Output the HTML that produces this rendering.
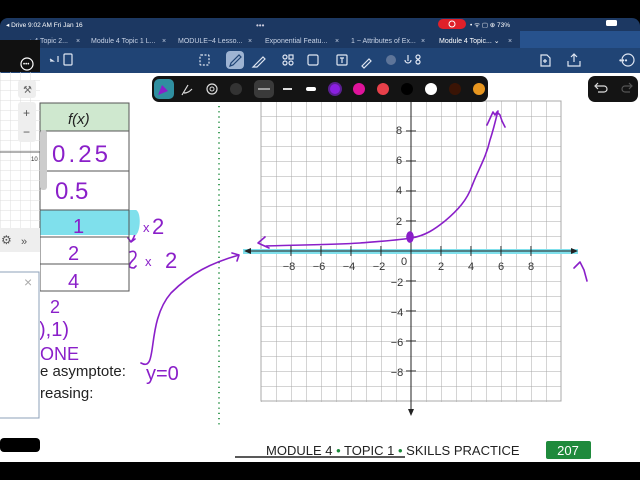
<!DOCTYPE html>
<html><head><meta charset="utf-8"><style>
html,body{margin:0;padding:0;background:#000;width:640px;height:480px;overflow:hidden}
svg{display:block}
text{font-family:"Liberation Sans",sans-serif}
</style></head><body>
<svg width="640" height="480" viewBox="0 0 640 480" xmlns="http://www.w3.org/2000/svg">
<defs>
<pattern id="g" x="261" y="101" width="15" height="15" patternUnits="userSpaceOnUse">
<path d="M0 0H15M0 0V15" stroke="#a8a8a8" stroke-width="1" fill="none"/>
</pattern>
<pattern id="g2" x="0" y="0" width="10" height="10" patternUnits="userSpaceOnUse">
<path d="M0 0H10M0 0V10" stroke="#dcdcdc" stroke-width="1" fill="none"/>
</pattern>
</defs>
<rect width="640" height="480" fill="#000"/>
<rect x="0" y="18" width="640" height="55" fill="#1c3862" rx="8"/>
<rect x="0" y="48" width="640" height="25" fill="#204475"/>
<text x="6" y="27" font-size="6.5" fill="#fff">◂ Drive  9:02 AM  Fri Jan 16</text>
<text x="256" y="28" font-size="8" fill="#ccd">•••</text>
<rect x="438" y="19" width="28" height="10" rx="5" fill="#e0202a"/>
<circle cx="452" cy="24" r="3" fill="none" stroke="#fff" stroke-width="1"/>
<text x="470" y="27" font-size="6.5" fill="#fff">• ᯤ ▢ ⊕ 73%</text>
<rect x="606" y="20" width="11" height="6" rx="1.5" fill="#fff"/>
<rect x="520" y="31" width="120" height="17" fill="#27528d"/>
<g font-size="7" fill="#c8d3e6">
<text x="30" y="43">› 4 Topic 2...</text><text x="76" y="43">×</text>
<text x="91" y="43">Module 4 Topic 1 L...</text><text x="162" y="43">×</text>
<text x="178" y="43">MODULE~4 Lesso...</text><text x="248" y="43">×</text>
<text x="265" y="43">Exponential Featu...</text><text x="335" y="43">×</text>
<text x="351" y="43">1 ~ Attributes of Ex...</text><text x="421" y="43">×</text>
<text x="439" y="43" fill="#fff">Module 4 Topic... ⌄</text><text x="508" y="43">×</text>
</g>
<g fill="none" stroke="#dfe6f2" stroke-width="1.2">
<rect x="200" y="55" width="9" height="10" rx="1" stroke-dasharray="2 1.5"/>
<rect x="226" y="51" width="18" height="18" rx="4" fill="#9eb4d3" stroke="none"/>
<path d="M230 66l3-1 8-8-2-2-8 8z" stroke="#204475"/>
<path d="M255 65l8-8 2 2-8 8h-4z"/>
<circle cx="285" cy="57" r="2"/><rect x="289" y="55" width="4" height="4"/><circle cx="285" cy="63" r="2"/><circle cx="291" cy="63" r="2"/>
<rect x="308" y="55" width="10" height="10" rx="1.5"/>
<rect x="337" y="55" width="10" height="10" rx="1"/><path d="M340 58h4M342 58v5"/>
<path d="M362 66l7-7 2 2-7 7z"/>
<circle cx="391" cy="60" r="5" fill="#5e7599" stroke="none"/>
<path d="M408 55v6M405 60a3 3 0 006 0"/><circle cx="418" cy="57" r="2"/><circle cx="418" cy="62" r="2"/>
<path d="M541 55h6l3 3v8h-9z"/><path d="M545 59v4M543 61h4"/>
<path d="M571 57l3-3 3 3M574 54v8M568 61v5h12v-5"/>
<circle cx="628" cy="60" r="6"/>
<path d="M50 59l3 2-3 0M58 56v6"/>
<rect x="64" y="54" width="8" height="11" rx="1"/>
</g>
<text x="619" y="63" font-size="8" fill="#dfe6f2">•••</text>
<rect x="0" y="73" width="640" height="389" fill="#fff"/>
<line x1="219" y1="80" x2="219" y2="425" stroke="#1a8a3a" stroke-width="1.6" stroke-dasharray="1.2 4"/>
<rect x="261" y="101" width="300" height="301" fill="url(#g)"/>
<rect x="261" y="101" width="300" height="300" fill="none" stroke="#a8a8a8"/>
<line x1="243" y1="251.5" x2="578" y2="251.5" stroke="#7fe0ec" stroke-width="5"/>
<line x1="248" y1="251" x2="574" y2="251" stroke="#222" stroke-width="1"/>
<path d="M244 251l7-3v6zM578 251l-7-3v6z" fill="#222"/>
<line x1="411" y1="95" x2="411" y2="410" stroke="#222" stroke-width="1"/>
<path d="M411 416l-3-7h6z" fill="#222"/>
<g font-size="11" fill="#333" text-anchor="middle" font-family="DejaVu Sans">
<text x="289" y="270">−8</text><text x="319" y="270">−6</text><text x="349" y="270">−4</text><text x="379" y="270">−2</text>
<text x="404" y="265">0</text><text x="441" y="270">2</text><text x="471" y="270">4</text><text x="501" y="270">6</text><text x="531" y="270">8</text>
<text x="399" y="134">8</text><text x="399" y="164">6</text><text x="399" y="194">4</text><text x="399" y="225">2</text>
<text x="397" y="286">−2</text><text x="397" y="316">−4</text><text x="397" y="346">−6</text><text x="397" y="376">−8</text>
</g>
<g stroke="#222"><path d="M406 131h10M406 161h10M406 191h10M406 221h10M406 281h10M406 311h10M406 341h10M406 371h10M291 246v10M321 246v10M351 246v10M381 246v10M441 246v10M471 246v10M501 246v10M531 246v10"/></g>
<g fill="none" stroke="#8a1fc9" stroke-width="1.6" stroke-linecap="round" stroke-linejoin="round">
<path d="M266 246 C290 245 330 245 360 243 C385 241 400 240 411 238 C425 236 435 229 445 221 C458 210 467 200 472 186 C478 170 486 158 490 140 C494 128 496 118 498 111"/>
<path d="M487 125l6-13 2 3 2-3 3 3 2 6 3 6"/>
<path d="M265 237l-7 6 11 5"/>
<path d="M574 268l6-6 4 8 3 11"/>
<ellipse cx="410" cy="237" rx="3" ry="5" fill="#8a1fc9"/>
<path d="M129 226c8-2 8 8 2 16l-3-4M131 242l4-3"/>
<path d="M130 252c6-3 8 4 3 8c-4 4-6 8 1 8l2-2"/>
<path d="M141 363c18 10 4-40 30-70c20-20 40-30 68-38l-7-2M239 255l-2 6"/>
</g>
<g fill="#8a1fc9" font-size="13"><text x="143" y="232">x</text><text x="145" y="266">x</text></g>
<g fill="#8a1fc9" font-size="22"><text x="152" y="234">2</text><text x="165" y="268">2</text></g>
<text x="146" y="380" font-size="20" fill="#8a1fc9">y=0</text>
<rect x="40" y="103" width="89" height="28" fill="#cfe8cf"/>
<path d="M40 210h96c5 2 5 20 0 25H40z" fill="#7fe0ec"/>
<g fill="none" stroke="#555" stroke-width="1">
<rect x="40" y="103" width="89" height="188"/>
<path d="M40 131h89M40 171h89M40 210h89M40 237h89M40 264h89"/>
</g>
<text x="68" y="124" font-size="15" font-style="italic" fill="#222">f(x)</text>
<g fill="#8a1fc9" font-size="24">
<text x="52" y="162" textLength="56">0.25</text><text x="55" y="199">0.5</text>
<text x="73" y="233" font-size="20">1</text><text x="68" y="260" font-size="20">2</text><text x="68" y="288" font-size="20">4</text>
<text x="50" y="313" font-size="18">2</text><text x="39" y="336" font-size="20">),1)</text><text x="40" y="360" font-size="18">ONE</text>
</g>
<text x="40" y="376" font-size="15" fill="#222">e asymptote:</text>
<text x="40" y="398" font-size="15" fill="#222">reasing:</text>
<line x1="235" y1="457" x2="405" y2="457" stroke="#222" stroke-width="1.5"/>
<text x="266" y="455" font-size="13" fill="#222">MODULE 4  <tspan fill="#1a8a3a">•</tspan>  TOPIC 1  <tspan fill="#1a8a3a">•</tspan>  SKILLS PRACTICE</text>
<rect x="546" y="441" width="45" height="18" rx="2" fill="#1f8a3c"/>
<text x="568" y="455" font-size="13" fill="#fff" text-anchor="middle">207</text>
<rect x="0" y="40" width="40" height="32" fill="#111"/>
<circle cx="27" cy="64" r="6" fill="none" stroke="#fff" stroke-width="1.2"/>
<text x="23" y="66" font-size="6" fill="#fff">•••</text>
<rect x="0" y="72" width="40" height="156" fill="url(#g2)"/>
<line x1="0" y1="152" x2="40" y2="152" stroke="#666"/>
<text x="31" y="161" font-size="6" fill="#333">10</text>
<rect x="18" y="80" width="18" height="18" rx="3" fill="#eee"/>
<text x="23" y="93" font-size="10" fill="#666">⚒</text>
<rect x="18" y="102" width="18" height="40" rx="3" fill="#eee"/>
<text x="23" y="117" font-size="12" fill="#555">+</text><text x="23" y="136" font-size="12" fill="#555">−</text>
<rect x="40" y="130" width="7" height="60" rx="3" fill="#ccc"/>
<rect x="0" y="228" width="40" height="24" fill="#eee"/>
<text x="1" y="244" font-size="12" fill="#555">⚙</text><text x="21" y="245" font-size="11" fill="#555">»</text>
<rect x="0" y="252" width="40" height="186" fill="#fff"/>
<rect x="-1" y="272" width="40" height="146" fill="none" stroke="#8da0b8"/>
<text x="24" y="287" font-size="14" fill="#aaa">×</text>
<rect x="0" y="438" width="40" height="14" rx="4" fill="#000"/>
<rect x="152" y="76" width="336" height="26" rx="7" fill="#141414"/>
<rect x="154" y="79" width="20" height="20" rx="5" fill="#2f8fa0"/>
<path d="M158 95l4-10 6 6z" fill="#8a1fc9"/>
<path d="M182 95l6-10M184 93c4 0 6-2 8-4" stroke="#ddd" fill="none" stroke-width="1.2"/>
<circle cx="212" cy="89" r="5" fill="none" stroke="#ddd" stroke-width="1.2"/><circle cx="212" cy="89" r="2" fill="none" stroke="#ddd"/>
<circle cx="236" cy="89" r="6" fill="#333"/>
<rect x="254" y="80" width="20" height="18" rx="5" fill="#3a3a3a"/>
<path d="M258 89h12" stroke="#ddd" stroke-width="1.2"/>
<path d="M283 89h9" stroke="#ddd" stroke-width="2"/>
<rect x="306" y="87" width="10" height="4" rx="2" fill="#fff"/>
<circle cx="335" cy="89" r="7" fill="#5a1f90"/><circle cx="335" cy="89" r="5" fill="#8a1fe0"/>
<circle cx="359" cy="89" r="6" fill="#e0139b"/>
<circle cx="383" cy="89" r="6" fill="#e8404a"/>
<circle cx="407" cy="89" r="6" fill="#000"/>
<circle cx="431" cy="89" r="6" fill="#fff"/>
<circle cx="455" cy="89" r="6" fill="#3a1405"/>
<circle cx="479" cy="89" r="6" fill="#e8961f"/>
<rect x="588" y="76" width="50" height="26" rx="7" fill="#141414"/>
<path d="M596 86h8a3 3 0 010 6h-6M598 83l-3 3 3 3" fill="none" stroke="#ddd" stroke-width="1.2"/>
<path d="M632 86h-7a3 3 0 000 6h5M629 83l3 3-3 3" fill="none" stroke="#555" stroke-width="1.2"/>
</svg>
</body></html>
